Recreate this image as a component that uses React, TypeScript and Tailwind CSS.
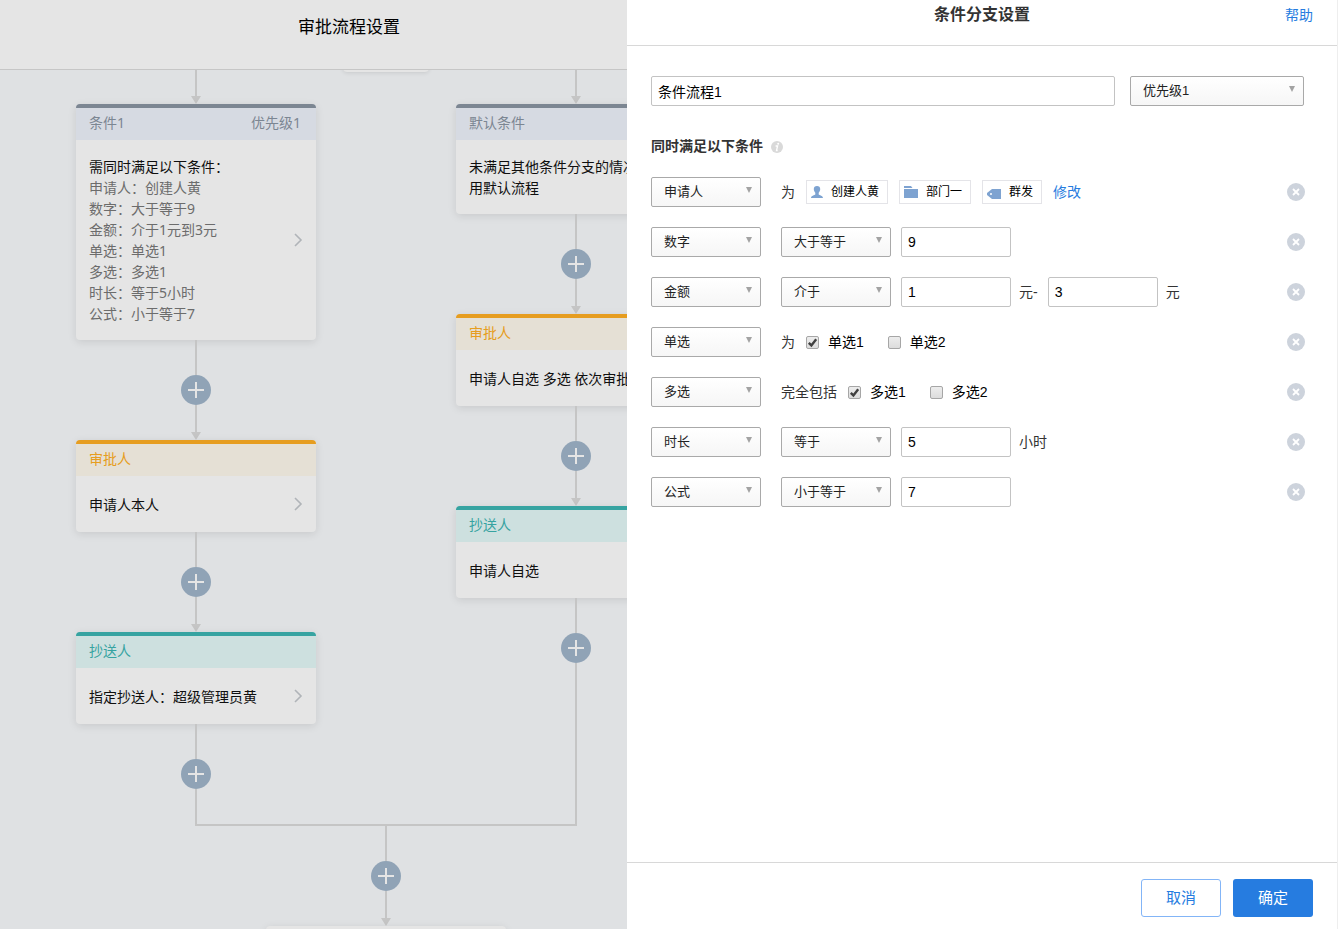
import { useState } from 'react';

type NodeKind = 'condition' | 'approver' | 'cc';

interface FlowNode {
  id: number;
  kind: NodeKind;
  title: string;
  extra?: string;
  text: string;
  details?: string[];
}

interface Condition {
  id: number;
  field: string;
  operator?: string;
  label?: string;
  values?: string[];
  units?: string[];
  choices?: { name: string; checked: boolean }[];
  targets?: { name: string; type: 'user' | 'folder' | 'tag' }[];
}

const kindStyles: Record<NodeKind, string> = {
  condition: 'border-[#7c8692] bg-[#d6dae2] text-[#7c8692]',
  approver: 'border-[#e69d20] bg-[#e5e0d5] text-[#e69d20]',
  cc: 'border-[#36a3a1] bg-[#cde0df] text-[#36a3a1]'
};

const leftBranch: FlowNode[] = [
  {
    id: 1,
    kind: 'condition',
    title: '条件1',
    extra: '优先级1',
    text: '需同时满足以下条件：',
    details: [
      '申请人：创建人黄',
      '数字：大于等于9',
      '金额：介于1元到3元',
      '单选：单选1',
      '多选：多选1',
      '时长：等于5小时',
      '公式：小于等于7'
    ]
  },
  { id: 2, kind: 'approver', title: '审批人', text: '申请人本人' },
  { id: 3, kind: 'cc', title: '抄送人', text: '指定抄送人：超级管理员黄' }
];

const rightBranch: FlowNode[] = [
  { id: 4, kind: 'condition', title: '默认条件', text: '未满足其他条件分支的情况，使用默认流程' },
  { id: 5, kind: 'approver', title: '审批人', text: '申请人自选 多选 依次审批' },
  { id: 6, kind: 'cc', title: '抄送人', text: '申请人自选' }
];

const initialConditions: Condition[] = [
  {
    id: 1,
    field: '申请人',
    label: '为',
    targets: [
      { name: '创建人黄', type: 'user' },
      { name: '部门一', type: 'folder' },
      { name: '群发', type: 'tag' }
    ]
  },
  { id: 2, field: '数字', operator: '大于等于', values: ['9'] },
  { id: 3, field: '金额', operator: '介于', values: ['1', '3'], units: ['元-', '元'] },
  {
    id: 4,
    field: '单选',
    label: '为',
    choices: [
      { name: '单选1', checked: true },
      { name: '单选2', checked: false }
    ]
  },
  {
    id: 5,
    field: '多选',
    label: '完全包括',
    choices: [
      { name: '多选1', checked: true },
      { name: '多选2', checked: false }
    ]
  },
  { id: 6, field: '时长', operator: '等于', values: ['5'], units: ['小时'] },
  { id: 7, field: '公式', operator: '小于等于', values: ['7'] }
];

const fields = ['申请人', '数字', '金额', '单选', '多选', '时长', '公式'];
const operators = ['等于', '大于等于', '小于等于', '介于'];

const Arrow = () => (
  <svg className="h-2 w-2.5 shrink-0" viewBox="0 0 10 8">
    <path d="M0 0h10L5 8z" fill="#c5c5c5" />
  </svg>
);

const Line = () => <div className="w-0.5 flex-1 bg-[#c5c5c5]" />;

const AddButton = () => (
  <button aria-label="添加节点" className="flex size-[30px] shrink-0 items-center justify-center rounded-full bg-[#90a3b6]">
    <svg className="size-4" viewBox="0 0 16 16" stroke="#e5e5e5" strokeWidth="2">
      <path d="M8 0v16M0 8h16" />
    </svg>
  </button>
);

const Connector = () => (
  <div className="flex h-[100px] flex-col items-center">
    <Line />
    <AddButton />
    <div className="flex h-[35px] flex-col items-center">
      <Line />
      <Arrow />
    </div>
  </div>
);

const NodeCard = ({ node }: { node: FlowNode }) => (
  <div className="w-60 overflow-hidden rounded bg-[#e5e5e5] text-sm leading-[21px] shadow-[0_2px_8px_rgba(0,0,0,0.1)]">
    <div className={`flex h-9 items-center justify-between border-t-4 pr-[15px] pb-1 pl-[13px] ${kindStyles[node.kind]}`}>
      <span>{node.title}</span>
      {node.extra && <span>{node.extra}</span>}
    </div>
    <div className="flex min-h-14 items-center px-[13px] py-4">
      <div className="flex-1 text-[#0f0f0f]">
        <p>{node.text}</p>
        {node.details?.map((line) => (
          <p key={line} className="text-[#6c6c6c]">{line}</p>
        ))}
      </div>
      <svg className="h-3.5 w-2.5 shrink-0" viewBox="0 0 10 14" fill="none" stroke="#b0b4b8" strokeWidth="1.6">
        <path d="M2 1l6 6-6 6" />
      </svg>
    </div>
  </div>
);

const Branch = ({ nodes }: { nodes: FlowNode[] }) => (
  <div className="flex w-60 flex-col items-center">
    <div className="flex h-[34px] flex-col items-center">
      <Line />
      <Arrow />
    </div>
    {nodes.map((node, index) => (
      <div key={node.id} className="flex flex-col items-center">
        <NodeCard node={node} />
        {index < nodes.length - 1 && <Connector />}
      </div>
    ))}
    <div className="h-[35px] w-0.5 bg-[#c5c5c5]" />
    <AddButton />
    <div className="min-h-[35px] w-0.5 flex-1 bg-[#c5c5c5]" />
  </div>
);

const Select = ({ label, value, options, className }: { label: string; value: string; options: string[]; className: string }) => (
  <div className={`relative h-[30px] shrink-0 ${className}`}>
    <select
      aria-label={label}
      defaultValue={value}
      className="h-full w-full appearance-none rounded-xs border border-[#a9a9a9] bg-linear-to-b from-white to-[#f6f6f6] pr-6 pl-3 text-[13px] text-[#222]"
    >
      {options.map((option) => (
        <option key={option}>{option}</option>
      ))}
    </select>
    <svg className="pointer-events-none absolute top-2.5 right-[9px] size-1.5" viewBox="0 0 6 6">
      <path d="M0 0h6L3 6z" fill="#a3a3a3" />
    </svg>
  </div>
);

const Checkbox = ({ name, checked }: { name: string; checked: boolean }) => (
  <label className="flex items-center gap-[9px] text-black">
    <span className="relative size-[13px]">
      <input
        type="checkbox"
        defaultChecked={checked}
        className="peer block size-[13px] appearance-none rounded-xs border border-[#a6a6a6] bg-linear-to-b from-[#ededed] to-[#dcdcdc]"
      />
      <svg className="pointer-events-none absolute top-0 left-0 hidden size-[13px] peer-checked:block" viewBox="0 0 13 13" fill="none" stroke="#404040" strokeWidth="2.4">
        <path d="M2.8 6.8l2.6 2.6 4.8-6.2" />
      </svg>
    </span>
    {name}
  </label>
);

const TargetIcon = ({ type }: { type: 'user' | 'folder' | 'tag' }) => {
  if (type === 'user') {
    return (
      <svg className="h-4 w-4" viewBox="0 0 16 16" fill="#7ea3d1">
        <path d="M6 2c2.100 0 3.200 1.200 3.200 3.100 0 1.600-.7 2.800-1.500 3.700v1.700c.7.900 4.300 1 4.300 3.500H0c0-2.500 3.600-2.600 4.300-3.500V8.800C3.500 7.900 2.800 6.700 2.800 5.100 2.800 3.200 3.900 2 6 2z" />
      </svg>
    );
  }
  if (type === 'folder') {
    return (
      <svg className="h-4 w-[18px]" viewBox="0 0 18 16" fill="#7ea3d1">
        <path d="M0 2h7l1.500 2H0zM0 5h14v9H0z" />
      </svg>
    );
  }
  return (
    <svg className="h-4 w-[18px]" viewBox="0 0 18 16" fill="#7ea3d1">
      <path fillRule="evenodd" d="M5 5h9v10H5L0 11V9zM4 9a1 1 0 100 2 1 1 0 000-2z" />
    </svg>
  );
};

const inputClass = 'h-[30px] rounded-xs border border-[#c3c3c3] bg-white px-1.5 text-sm text-black';

const ConditionRow = ({ condition, onRemove }: { condition: Condition; onRemove: () => void }) => (
  <div className="flex h-[30px] items-center text-sm text-[#333]">
    <Select label="条件字段" value={condition.field} options={fields} className="mr-5 w-[110px]" />
    {condition.operator && (
      <Select label="运算符" value={condition.operator} options={operators} className="w-[110px]" />
    )}
    {condition.values?.map((value, index) => (
      <div key={index} className="ml-2.5 flex items-center gap-2">
        <input aria-label={`${condition.field}${index + 1}`} defaultValue={value} className={`${inputClass} w-[110px]`} />
        {condition.units && <span>{condition.units[index]}</span>}
      </div>
    ))}
    {condition.label && <span className="mr-[11px]">{condition.label}</span>}
    {condition.targets && (
      <div className="flex items-center gap-[11px]">
        {condition.targets.map((target) => (
          <span key={target.name} className="flex h-6 items-center gap-1 border border-[#e4e4e8] pr-2 pl-1 text-xs text-black">
            <TargetIcon type={target.type} />
            {target.name}
          </span>
        ))}
        <a href="#edit" className="text-[#267ce0]">修改</a>
      </div>
    )}
    {condition.choices && (
      <div className="flex items-center gap-6">
        {condition.choices.map((choice) => (
          <Checkbox key={choice.name} name={choice.name} checked={choice.checked} />
        ))}
      </div>
    )}
    <button aria-label="删除条件" onClick={onRemove} className="ml-auto shrink-0">
      <svg className="size-[18px]" viewBox="0 0 18 18">
        <circle cx="9" cy="9" r="9" fill="#cdd3dc" />
        <path d="M6 6l6 6M12 6l-6 6" stroke="#fff" strokeWidth="1.8" />
      </svg>
    </button>
  </div>
);

const App = () => {
  const [conditions, setConditions] = useState<Condition[]>(initialConditions);

  return (
    <div className="flex h-screen overflow-hidden bg-[#dfe1e3] font-['Liberation_Sans','Noto_Sans_CJK_SC',sans-serif]">
      <main className="flex min-w-0 flex-1 flex-col overflow-hidden font-['Noto_Sans','Noto_Sans_CJK_SC',sans-serif]">
        <header className="h-[70px] shrink-0 border-b border-[#c6c6c6] bg-[#e5e5e5] pt-3.5 pl-[71px] text-center">
          <h1 className="text-[17px] leading-[26px] text-black">审批流程设置</h1>
        </header>
        <div className="relative flex-1 overflow-hidden pl-[76px]">
          {/* bottom edge of the node scrolled under the header */}
          <div className="absolute -top-2 left-[343px] h-2.5 w-[86px] rounded-b bg-[#e5e5e5] shadow-[0_1px_4px_rgba(0,0,0,0.1)]" />
          <div className="flex w-[620px] flex-col items-center">
            <div className="flex w-full justify-between">
              <Branch nodes={leftBranch} />
              <Branch nodes={rightBranch} />
            </div>
            <div className="h-0.5 w-[382px] bg-[#c5c5c5]" />
            <Connector />
            <div className="h-24 w-60 rounded bg-[#e5e5e5] shadow-[0_2px_8px_rgba(0,0,0,0.1)]" />
          </div>
        </div>
      </main>

      <aside className="flex w-[711px] shrink-0 flex-col border-r border-[#eee] bg-white">
        <header className="flex h-[46px] shrink-0 items-start border-b border-[#d8d8d8] px-6 pt-[3px] leading-6">
          <span className="flex-1" />
          <h2 className="text-base leading-6 font-bold text-[#333]">条件分支设置</h2>
          <a href="#help" className="flex-1 text-right text-sm leading-6 text-[#267ce0]">帮助</a>
        </header>

        <div className="flex-1 overflow-hidden pt-[30px] pl-6">
          <div className="flex gap-[15px] pr-[33px]">
            <input aria-label="条件名称" defaultValue="条件流程1" className={`${inputClass} min-w-0 flex-1`} />
            <Select label="优先级" value="优先级1" options={['优先级1', '优先级2']} className="w-[174px]" />
          </div>
          <h3 className="mt-[30px] flex items-center gap-2 text-sm leading-[21px] font-bold text-[#333]">
            同时满足以下条件
            <svg className="size-3" viewBox="0 0 12 12">
              <circle cx="6" cy="6" r="6" fill="#d9d9d9" />
              <circle cx="7.200" cy="2.700" r="1" fill="#fff" />
              <path d="M4.600 5h2L5.500 9.500h1.200" fill="none" stroke="#fff" strokeWidth="1.300" />
            </svg>
          </h3>
          <div className="mt-5 flex flex-col gap-5 pr-8">
            {conditions.map((condition) => (
              <ConditionRow
                key={condition.id}
                condition={condition}
                onRemove={() => setConditions(conditions.filter((item) => item.id !== condition.id))}
              />
            ))}
          </div>
        </div>

        <footer className="flex shrink-0 justify-end gap-3 border-t border-[#d8d8d8] px-6 pt-4 pb-3 text-[15px]">
          <button className="h-[38px] w-20 rounded-[3px] border border-[#83b5f7] bg-white text-[#267ce0]">取消</button>
          <button className="h-[38px] w-20 rounded-[3px] bg-[#267ce0] text-white">确定</button>
        </footer>
      </aside>
    </div>
  );
};

export default App;
